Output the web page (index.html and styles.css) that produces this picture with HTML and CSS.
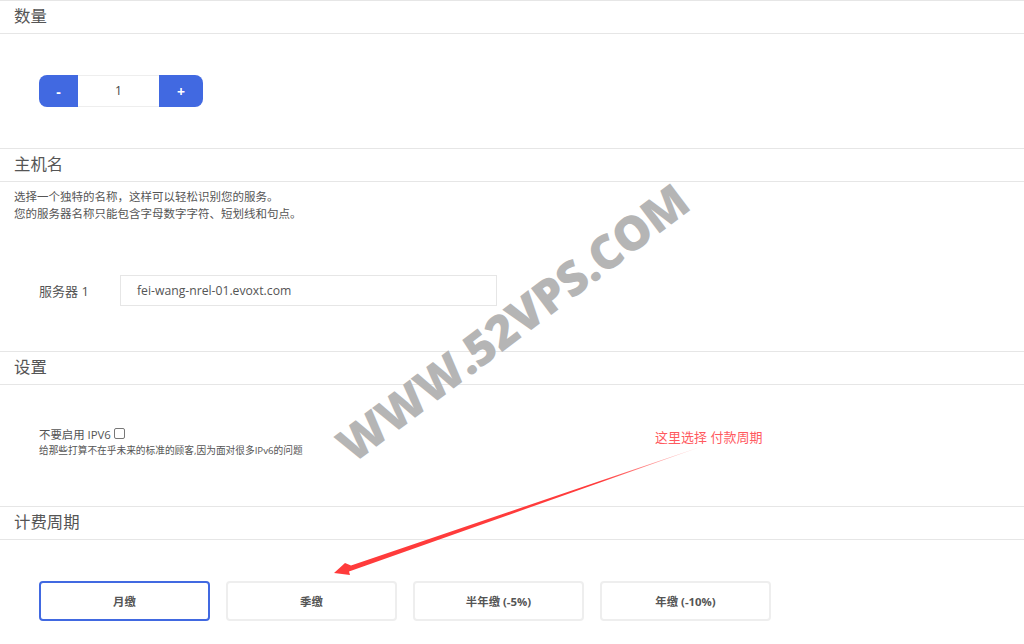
FILE: index.html
```html
<!DOCTYPE html>
<html lang="zh-CN">
<head>
<meta charset="utf-8">
<title>配置</title>
<link rel="stylesheet" href="styles.css">
</head>
<body>
<main class="page">
  <section class="section section-qty">
    <h2 class="head">数量</h2>
    <div class="qty-body">
      <div class="stepper">
        <button class="step step-minus" type="button">-</button>
        <span class="step-value">1</span>
        <button class="step step-plus" type="button">+</button>
      </div>
    </div>
  </section>
  <section class="section section-host">
    <h2 class="head">主机名</h2>
    <div class="host-body">
      <p class="hint">选择一个独特的名称，这样可以轻松识别您的服务。<br>您的服务器名称只能包含字母数字字符、短划线和句点。</p>
      <div class="host-row">
        <span class="host-label">服务器 1</span>
        <div class="host-input">fei-wang-nrel-01.evoxt.com</div>
      </div>
    </div>
  </section>
  <section class="section section-settings">
    <h2 class="head">设置</h2>
    <div class="settings-body">
      <div class="opt-line">不要启用 IPV6 <span class="check"></span></div>
      <div class="opt-note">给那些打算不在乎未来的标准的顾客,因为面对很多IPv6的问题</div>
    </div>
  </section>
  <section class="section section-cycle">
    <h2 class="head">计费周期</h2>
    <div class="cycle-body">
      <button class="cycle cycle-active" type="button">月缴</button>
      <button class="cycle" type="button">季缴</button>
      <button class="cycle" type="button">半年缴 (-5%)</button>
      <button class="cycle" type="button">年缴 (-10%)</button>
    </div>
  </section>
</main>
<div class="mark-clip"><div class="mark">WWW.52VPS.COM</div></div>
<div class="note">这里选择 付款周期</div>
<svg class="arrow" width="1024" height="644" viewBox="0 0 1024 644">
  <defs>
    <linearGradient id="fade" x1="706" y1="445" x2="600" y2="482" gradientUnits="userSpaceOnUse">
      <stop offset="0" stop-color="#ff3b3b" stop-opacity="0.1"/>
      <stop offset="1" stop-color="#ff3b3b"/>
    </linearGradient>
  </defs>
  <path d="M706 445 L351 565.5 L345 563 L334 573 L350 575 L349 571.5 Z" fill="url(#fade)"/>
</svg>
</body>
</html>
```
FILE: styles.css
```css
html, body {
  margin: 0;
  padding: 0;
  height: 644px;
  overflow: hidden;
  background: #fff;
}
body {
  position: relative;
  font-family: "Open Sans", "Noto Sans CJK SC", sans-serif;
  color: #555;
  font-size: 12px;
}
.head {
  margin: 0;
  height: 32px;
  line-height: 30px;
  padding-left: 14px;
  font-size: 16.4px;
  font-weight: 400;
  color: #555;
  border-top: 1px solid #e6e6e6;
  border-bottom: 1px solid #e6e6e6;
  box-sizing: content-box;
}
.qty-body {
  height: 114px;
  padding-left: 39px;
  display: flex;
  align-items: flex-start;
}
.stepper {
  display: flex;
  height: 32px;
  margin-top: 41px;
}
.step {
  width: 39px;
  height: 32px;
  padding: 0;
  border: 0;
  background: #4169e1;
  color: #fff;
  font: 700 14px "Open Sans", sans-serif;
}
.step-minus { border-radius: 8px 0 0 8px; }
.step-plus { width: 44px; border-radius: 0 8px 8px 0; }
.step-value {
  width: 81px;
  box-sizing: border-box;
  border-top: 1px solid #eee;
  border-bottom: 1px solid #eee;
  text-align: center;
  line-height: 29px;
  font-size: 12px;
  color: #444;
}
.host-body {
  padding: 6px 14px 0;
  height: 163px;
}
.hint {
  margin: 0;
  font-size: 11.5px;
  line-height: 17px;
  color: #555;
}
.host-row {
  display: flex;
  align-items: center;
  margin: 53px 0 0 25px;
}
.host-label {
  width: 81px;
  font-size: 13px;
  color: #555;
}
.host-input {
  width: 377px;
  height: 31px;
  box-sizing: border-box;
  border: 1px solid #e6e6e6;
  padding-left: 16px;
  line-height: 29px;
  font-size: 12.2px;
  color: #555;
}
.settings-body {
  height: 121px;
  padding: 42px 0 0 39px;
  box-sizing: border-box;
}
.opt-line {
  display: flex;
  align-items: center;
  gap: 3px;
  font-size: 11.4px;
  line-height: 15px;
  color: #555;
}
.check {
  width: 9px;
  height: 9px;
  margin-top: -2px;
  border: 1px solid #777;
  border-radius: 2px;
}
.opt-note {
  font-size: 9.7px;
  line-height: 14px;
  margin-top: 2px;
  color: #555;
}
.cycle-body {
  display: flex;
  gap: 16px;
  padding: 41px 0 0 39px;
}
.cycle {
  width: 171px;
  height: 40px;
  box-sizing: border-box;
  background: #fff;
  border: 2px solid #eee;
  border-radius: 4px;
  font: 700 11.4px/35px "Open Sans", "Noto Sans CJK SC", sans-serif;
  color: #555;
  padding: 0;
}
.cycle-active { border-color: #4169e1; }
.mark-clip {
  position: absolute;
  left: 0;
  top: 0;
  width: 1024px;
  height: 466px;
  overflow: hidden;
  pointer-events: none;
}
.mark {
  position: absolute;
  left: 292px;
  top: 297px;
  width: 440px;
  text-align: center;
  white-space: nowrap;
  font: 800 47px/50px "Open Sans", sans-serif;
  letter-spacing: -0.5px;
  color: #b5b5b5;
  transform: rotate(-37deg);
}
.note {
  position: absolute;
  left: 655px;
  top: 428px;
  font-size: 13px;
  line-height: 18px;
  color: #ff5a5f;
  white-space: nowrap;
}
.arrow {
  position: absolute;
  left: 0;
  top: 0;
  pointer-events: none;
}
```
